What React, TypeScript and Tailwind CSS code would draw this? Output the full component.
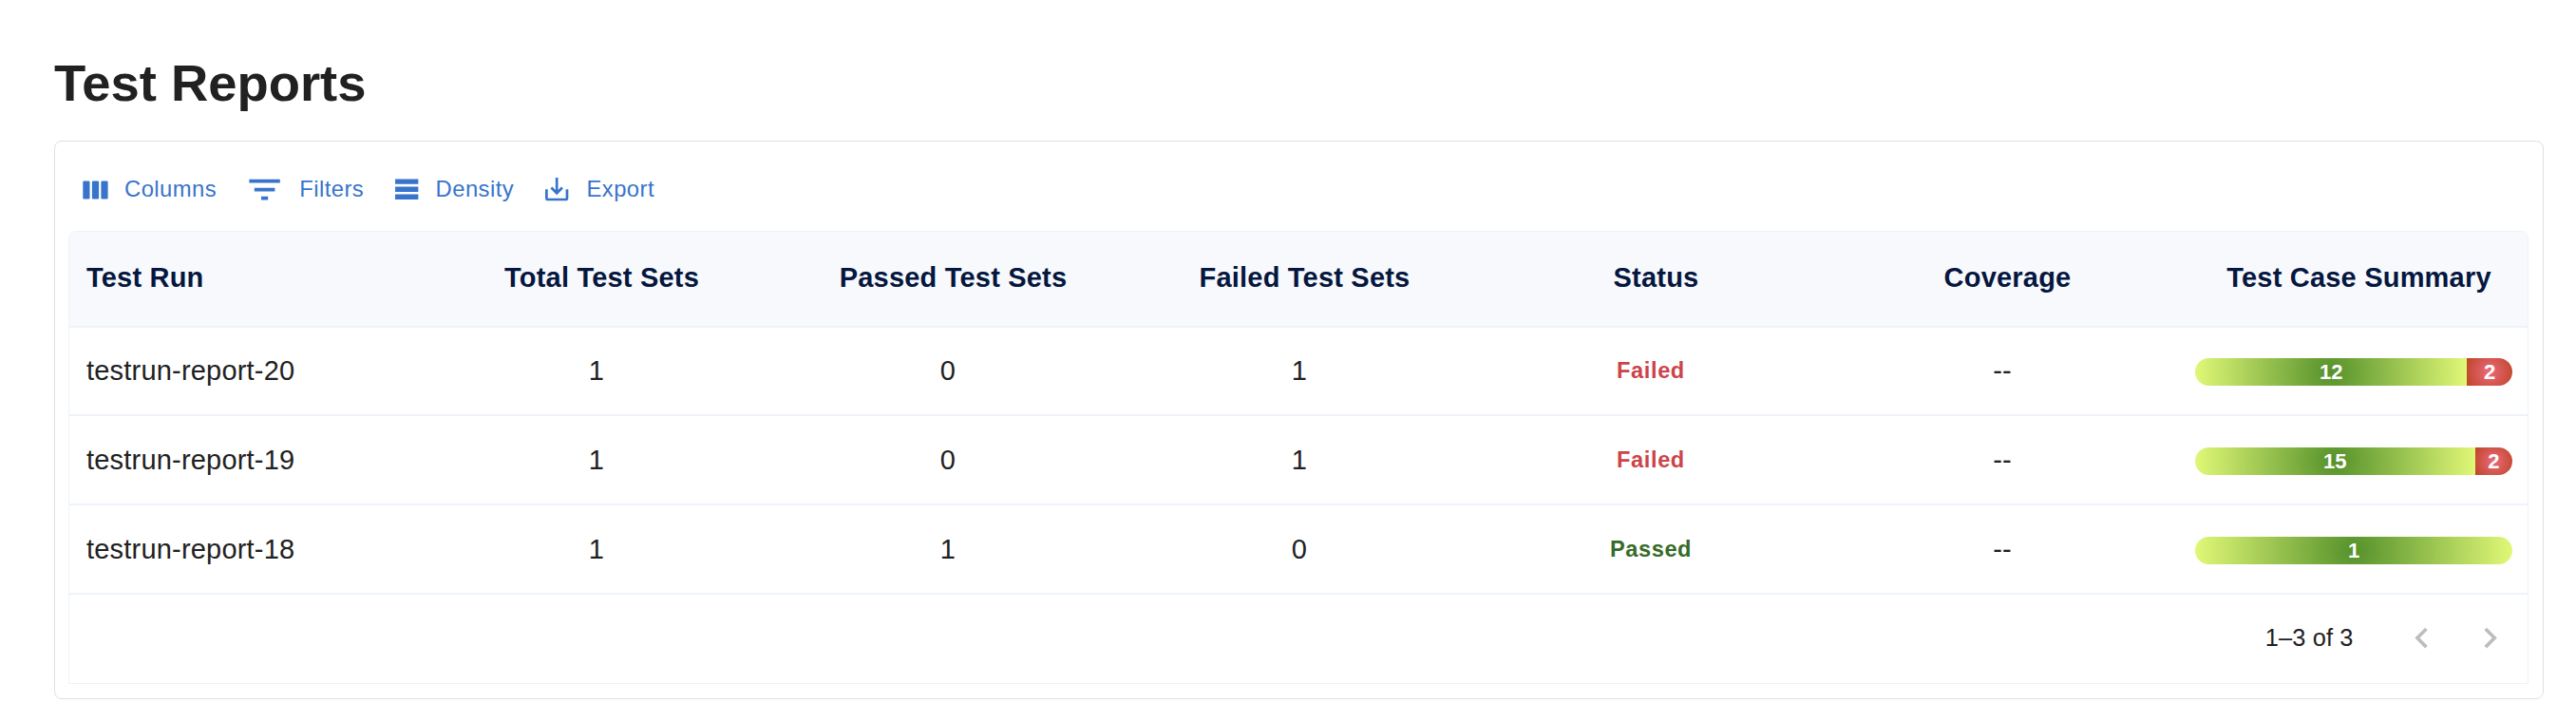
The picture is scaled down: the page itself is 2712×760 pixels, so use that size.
import clsx from "clsx";
import type { ReactNode } from "react";

type RunStatus = "Failed" | "Passed";

interface TestRun {
  id: string;
  total: number;
  passed: number;
  failed: number;
  status: RunStatus;
  coverage: string;
  passedCases: number;
  failedCases: number;
}

const runs: TestRun[] = [
  { id: "testrun-report-20", total: 1, passed: 0, failed: 1, status: "Failed", coverage: "--", passedCases: 12, failedCases: 2 },
  { id: "testrun-report-19", total: 1, passed: 0, failed: 1, status: "Failed", coverage: "--", passedCases: 15, failedCases: 2 },
  { id: "testrun-report-18", total: 1, passed: 1, failed: 0, status: "Passed", coverage: "--", passedCases: 1, failedCases: 0 },
];

const headers = [
  "Total Test Sets",
  "Passed Test Sets",
  "Failed Test Sets",
  "Status",
  "Coverage",
  "Test Case Summary",
];

interface ToolbarButtonProps {
  label: string;
  icon: ReactNode;
  className?: string;
}

function ToolbarButton({ label, icon, className }: ToolbarButtonProps) {
  return (
    <button className={clsx("flex items-center text-[23.8px] leading-8 tracking-[0.45px]", className)}>
      {icon}
      <span className="pb-px">{label}</span>
    </button>
  );
}

function Toolbar() {
  return (
    <div className="flex h-[94px] items-center pl-[15px] pt-[7px] text-[#3874cb]">
      <ToolbarButton
        label="Columns"
        className="gap-[17px]"
        icon={
          <svg width="27" height="20" viewBox="0 0 27 20" fill="currentColor">
            <rect x="0.3" y="0.5" width="7.2" height="19" rx="1.2" />
            <rect x="9.9" y="0.5" width="7.2" height="19" rx="1.2" />
            <rect x="19.4" y="0.5" width="7.2" height="19" rx="1.2" />
          </svg>
        }
      />
      <ToolbarButton
        label="Filters"
        className="ml-[29px] gap-[15px]"
        icon={
          <svg width="43.2" height="43.2" viewBox="0 0 24 24" fill="currentColor">
            <path d="M10 18h4v-2h-4v2zM3 6v2h18V6H3zm3 7h12v-2H6v2z" />
          </svg>
        }
      />
      <ToolbarButton
        label="Density"
        className="ml-[29px] gap-[14px]"
        icon={
          <svg width="32.4" height="32.4" viewBox="0 0 24 24" fill="currentColor">
            <path d="M21 8H3V4h18v4zm0 2H3v4h18v-4zm0 6H3v4h18v-4z" />
          </svg>
        }
      />
      <ToolbarButton
        label="Export"
        className="ml-[29px] gap-[15px]"
        icon={
          <svg width="32.4" height="32.4" viewBox="0 0 24 24" fill="currentColor">
            <path d="M19 12v7H5v-7H3v7c0 1.1.9 2 2 2h14c1.1 0 2-.9 2-2v-7h-2zm-6 .67l2.59-2.58L17 11.5l-5 5-5-5 1.41-1.41L11 12.67V3h2z" />
          </svg>
        }
      />
    </div>
  );
}

function SummaryBar({ passed, failed }: { passed: number; failed: number }) {
  const share = (passed / (passed + failed)) * 100;

  return (
    <div className="flex h-[29px] w-[334px] overflow-hidden rounded-full text-[22px] leading-[29px] font-bold tracking-normal text-white">
      <div
        className="bg-[radial-gradient(circle,#55912b_0%,#e1f877_100%)] text-center"
        style={{ width: `${share}%` }}
      >
        {passed}
      </div>
      {failed > 0 && (
        <div className="flex-1 bg-[radial-gradient(circle,#eb6a7b_0%,#bd4426_100%)] text-center">
          {failed}
        </div>
      )}
    </div>
  );
}

function Row({ run }: { run: TestRun }) {
  return (
    <div className="grid h-[94px] grid-cols-[repeat(7,370px)] items-center border-b-2 border-[#eef3fa] pt-[2px] text-center text-[29px] tracking-[0.2px] text-[#212121] first:h-[93px] first:pt-px">
      <div className="pl-[18px] text-left">{run.id}</div>
      <div>{run.total}</div>
      <div>{run.passed}</div>
      <div>{run.failed}</div>
      <div
        className={clsx(
          "text-[23.6px] font-bold tracking-[0.6px]",
          run.status === "Failed" ? "text-[#cb444a]" : "text-[#376b28]"
        )}
      >
        {run.status}
      </div>
      <div>{run.coverage}</div>
      <div className="flex justify-center">
        <SummaryBar passed={run.passedCases} failed={run.failedCases} />
      </div>
    </div>
  );
}

export default function App() {
  return (
    <div className="h-[760px] w-[2712px] bg-white pl-[57px] pt-[54px] font-['Liberation_Sans',Arial,sans-serif]">
      <h1 className="h-[94px] text-[54.4px] leading-[67px] font-bold text-[#212121]">
        Test Reports
      </h1>

      <div className="h-[588px] w-[2621px] rounded-[8px] border border-[#e0e0e0] pr-[15px] pl-[14px]">
        <Toolbar />

        <div className="h-[477px] rounded-t-[8px] border border-[#eef3fa]">
          <div className="grid h-[101px] grid-cols-[repeat(7,370px)] items-center overflow-hidden rounded-t-[7px] border-b-2 border-[#eef3fa] bg-[#f8f9fd] pb-[2px] text-center text-[29px] font-bold tracking-[0.2px] text-[#05173f]">
            <div className="pl-[18px] text-left">Test Run</div>
            {headers.map((header) => (
              <div key={header} className="pl-[11px]">
                {header}
              </div>
            ))}
          </div>

          <div>
            {runs.map((run) => (
              <Row key={run.id} run={run} />
            ))}
          </div>

          <div className="flex h-[93px] items-center justify-end pr-[18px] pb-[2px] text-[25.4px] tracking-[0.15px] text-[#212121]">
            <span>1–3 of 3</span>
            <div className="ml-[50px] flex gap-[29px] text-[#bdbdbd]">
              <svg width="43.2" height="43.2" viewBox="0 0 24 24" fill="currentColor">
                <path d="M15.41 16.59L10.83 12l4.58-4.59L14 6l-6 6 6 6 1.41-1.41z" />
              </svg>
              <svg width="43.2" height="43.2" viewBox="0 0 24 24" fill="currentColor">
                <path d="M8.59 16.59L13.17 12 8.59 7.41 10 6l6 6-6 6-1.41-1.41z" />
              </svg>
            </div>
          </div>
        </div>
      </div>
    </div>
  );
}
